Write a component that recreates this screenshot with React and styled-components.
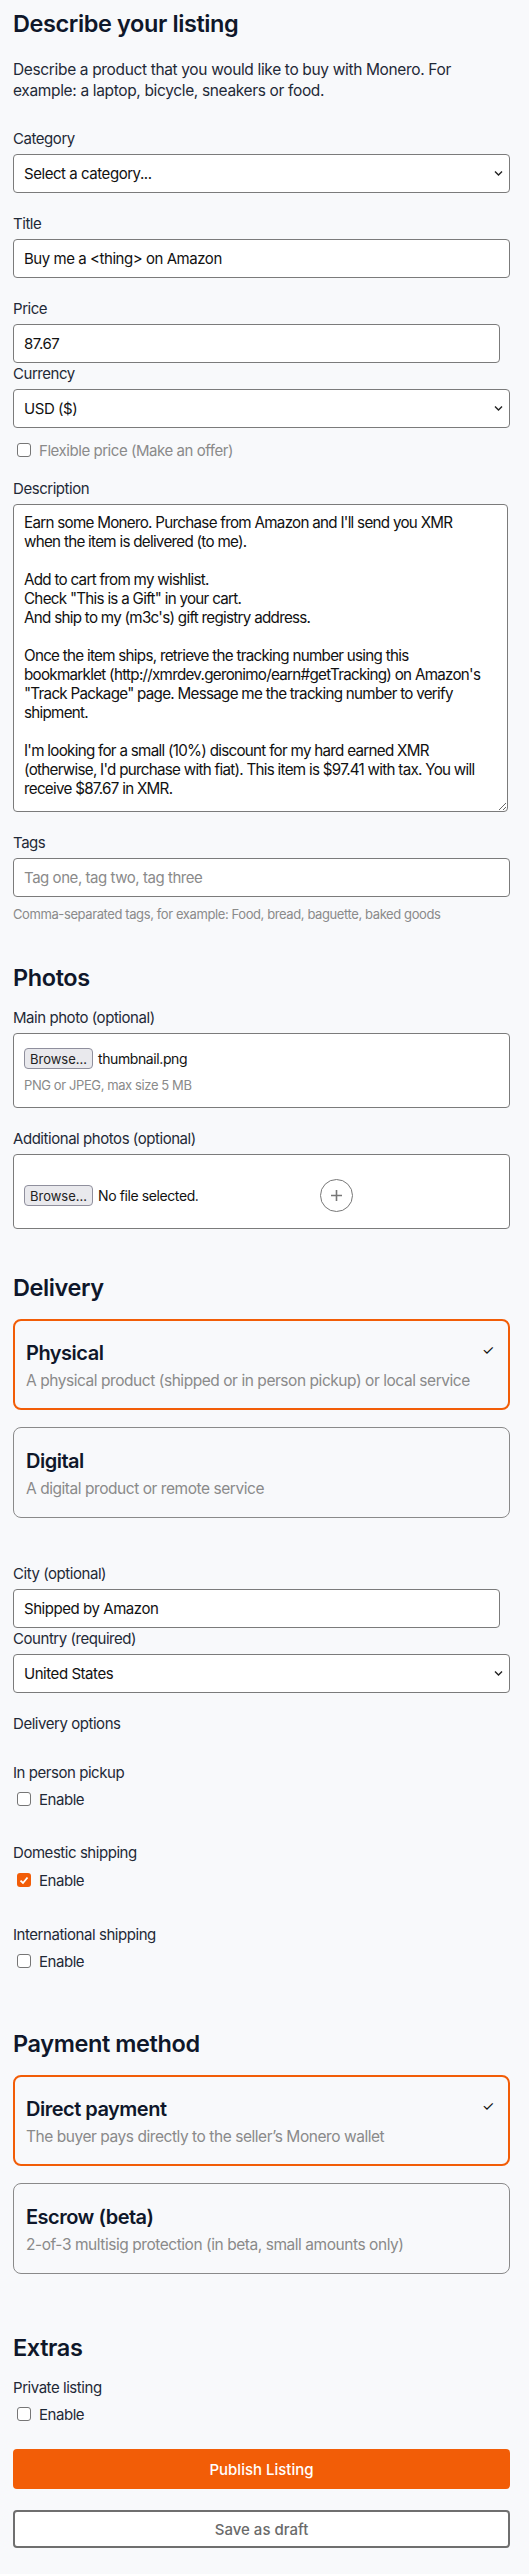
import React from 'react'
import styled, { createGlobalStyle } from 'styled-components'

const GlobalStyle = createGlobalStyle`
  body {
    margin: 0;
    background: #f8f9fb;
    font-family: Inter, "Noto Sans", sans-serif;
    color: #111827;
    letter-spacing: -0.45px;
  }
  * { box-sizing: border-box; }
`;

const Page = styled.main`
  padding: 9px 19px 24px 13px;
  display: flex;
  flex-direction: column;
`;

const Heading = styled.h2`
  font-size: 23.5px;
  line-height: 29px;
  font-weight: 600;
  color: #0f172a;
  margin: ${p => p.$top || 0}px 0 ${p => p.$bottom || 17}px;
  letter-spacing: -0.4px;
`;

const Intro = styled.p`
  font-size: 15.5px;
  line-height: 21px;
  letter-spacing: -0.35px;
  margin: 0 0 29px;
  color: #1f2937;
`;

const Field = styled.div`
  display: flex;
  flex-direction: column;
  margin-bottom: ${p => (p.$mb !== undefined ? p.$mb : 22)}px;
`;

const Label = styled.label`
  font-size: 15px;
  line-height: 18px;
  color: #1f2937;
  margin-bottom: ${p => (p.$mb !== undefined ? p.$mb : 6)}px;
`;

const Input = styled.input`
  height: 39px;
  width: ${p => (p.$narrow ? '487px' : '100%')};
  border: 1px solid #7b7b7b;
  border-radius: 4px;
  background: #fff;
  padding: 0 10px;
  font: inherit;
  font-size: 15px;
  letter-spacing: -0.45px;
  color: #111;
  &::placeholder { color: #8a8a8a; }
`;

const SelectBox = styled.div`
  position: relative;
  height: 39px;
  border: 1px solid #7b7b7b;
  border-radius: 4px;
  background: #fff;
  display: flex;
  align-items: center;
  padding: 0 10px;
  font-size: 15px;
  color: #111;
`;

const Chevron = styled.svg`
  position: absolute;
  right: 6px;
  top: 15px;
`;

const TextArea = styled.textarea`
  height: 308px;
  width: 495px;
  border: 1px solid #7b7b7b;
  border-radius: 4px;
  background: #fff;
  padding: 8px 10px;
  font: inherit;
  font-size: 15.2px;
  letter-spacing: -0.72px;
  line-height: 19px;
  color: #111;
  resize: vertical;
  overflow: hidden;
`;

const Hint = styled.div`
  font-size: 13px;
  line-height: 16px;
  letter-spacing: -0.4px;
  color: #8a8a8a;
  margin-top: ${p => p.$top || 0}px;
`;

const CheckRow = styled.label`
  display: flex;
  align-items: center;
  gap: 8px;
  height: 20px;
  padding-left: 4px;
  font-size: 15px;
  color: ${p => (p.$muted ? '#8a8a8a' : '#1f2937')};
  margin: ${p => p.$top || 0}px 0 ${p => p.$bottom || 0}px;
`;

const Box = styled.span`
  width: 14px;
  height: 14px;
  border-radius: 3px;
  border: ${p => (p.$on ? 'none' : '1px solid #767676')};
  background: ${p => (p.$on ? '#f25d07' : '#fff')};
  display: flex;
  align-items: center;
  justify-content: center;
  flex-shrink: 0;
`;

const FilePanel = styled.div`
  border: 1px solid #7b7b7b;
  border-radius: 4px;
  background: #fff;
  height: 75px;
  padding: ${p => p.$pad};
  display: flex;
  flex-direction: column;
`;

const FileRow = styled.div`
  display: flex;
  align-items: center;
  gap: 5px;
  font-size: 14px;
  letter-spacing: -0.4px;
  color: #111;
`;

const BrowseButton = styled.span`
  height: 21px;
  width: 69px;
  border: 1px solid #8f8f9d;
  border-radius: 4px;
  background: #e9e9ed;
  font-size: 13px;
  letter-spacing: 0;
  display: flex;
  align-items: center;
  justify-content: center;
  color: #222;
`;

const AddCircle = styled.span`
  width: 33px;
  height: 33px;
  border-radius: 50%;
  border: 1px solid #777;
  margin-left: 117px;
  display: flex;
  align-items: center;
  justify-content: center;
`;

const OptionCard = styled.div`
  position: relative;
  height: 91px;
  border: ${p => (p.$selected ? '2px solid #f25d07' : '1px solid #8a8a8a')};
  border-radius: 8px;
  padding: ${p => (p.$selected ? '20px 11px 0' : '21px 12px 0')};
  margin-bottom: ${p => p.$mb || 0}px;
  display: flex;
  flex-direction: column;
  gap: 6px;
`;

const CardTitle = styled.div`
  font-size: 20px;
  line-height: 24px;
  font-weight: 600;
  letter-spacing: -0.5px;
  color: #0f172a;
`;

const CardText = styled.div`
  font-size: 15.5px;
  line-height: 20px;
  color: #8a8a8a;
  white-space: nowrap;
`;

const Tick = styled.span`
  position: absolute;
  right: 14px;
  top: 20px;
  font-size: 14px;
  color: #111;
`;

const PrimaryButton = styled.button`
  height: 40px;
  border: none;
  border-radius: 4px;
  background: #f25d07;
  color: #fff;
  font: inherit;
  font-size: 15px;
  font-weight: 500;
  margin: 25px 0 21px;
`;

const GhostButton = styled.button`
  height: 38px;
  border: 2px solid #6f6f6f;
  border-radius: 4px;
  background: #fff;
  color: #6a6a6a;
  font: inherit;
  font-size: 15px;
  font-weight: 500;
`;

const description = `Earn some Monero. Purchase from Amazon and I'll send you XMR
when the item is delivered (to me).

Add to cart from my wishlist.
Check "This is a Gift" in your cart.
And ship to my (m3c's) gift registry address.

Once the item ships, retrieve the tracking number using this
bookmarklet (http://xmrdev.geronimo/earn#getTracking) on Amazon's
"Track Package" page. Message me the tracking number to verify
shipment.

I'm looking for a small (10%) discount for my hard earned XMR
(otherwise, I'd purchase with fiat). This item is $97.41 with tax. You will
receive $87.67 in XMR.`

const Select = ({ value }) => (
  <SelectBox>
    {value}
    <Chevron width="9" height="7" viewBox="0 0 9 7">
      <path d="M1 1.5 L4.5 5 L8 1.5" fill="none" stroke="#222" strokeWidth="1.4" />
    </Chevron>
  </SelectBox>
)

const Check = ({ on, children, ...rest }) => (
  <CheckRow {...rest}>
    <Box $on={on}>
      {on && (
        <svg width="10" height="9" viewBox="0 0 10 9">
          <path d="M1.5 4.6 L4 7 L8.5 1.5" fill="none" stroke="#fff" strokeWidth="1.8" />
        </svg>
      )}
    </Box>
    {children}
  </CheckRow>
)

const App = () => {
  return (
    <Page>
      <GlobalStyle />
      <Heading $bottom={21}>Describe your listing</Heading>
      <Intro>
        Describe a product that you would like to buy with Monero. For example: a laptop, bicycle, sneakers or food.
      </Intro>

      <Field>
        <Label>Category</Label>
        <Select value="Select a category..." />
      </Field>
      <Field>
        <Label>Title</Label>
        <Input defaultValue="Buy me a <thing> on Amazon" />
      </Field>
      <Field $mb={2}>
        <Label>Price</Label>
        <Input $narrow defaultValue="87.67" />
      </Field>
      <Field $mb={0}>
        <Label>Currency</Label>
        <Select value="USD ($)" />
      </Field>
      <Check $muted $top={12} $bottom={20}>Flexible price (Make an offer)</Check>
      <Field>
        <Label>Description</Label>
        <TextArea spellCheck={false} wrap="off" defaultValue={description} />
      </Field>
      <Field $mb={0}>
        <Label>Tags</Label>
        <Input placeholder="Tag one, tag two, tag three" />
        <Hint $top={9}>Comma-separated tags, for example: Food, bread, baguette, baked goods</Hint>
      </Field>

      <Heading $top={41}>Photos</Heading>
      <Field>
        <Label>Main photo (optional)</Label>
        <FilePanel $pad="14px 10px 0">
          <FileRow>
            <BrowseButton>Browse…</BrowseButton>
            thumbnail.png
          </FileRow>
          <Hint $top={8}>PNG or JPEG, max size 5 MB</Hint>
        </FilePanel>
      </Field>
      <Field $mb={0}>
        <Label>Additional photos (optional)</Label>
        <FilePanel $pad="24px 10px 0">
          <FileRow>
            <BrowseButton>Browse…</BrowseButton>
            No file selected.
            <AddCircle>
              <svg width="13" height="13" viewBox="0 0 13 13">
                <path d="M6.5 1 V12 M1 6.5 H12" stroke="#777" strokeWidth="1.6" />
              </svg>
            </AddCircle>
          </FileRow>
        </FilePanel>
      </Field>

      <Heading $top={44}>Delivery</Heading>
      <OptionCard $selected $mb={17}>
        <CardTitle>Physical</CardTitle>
        <CardText>A physical product (shipped or in person pickup) or local service</CardText>
        <Tick>✓</Tick>
      </OptionCard>
      <OptionCard $mb={47}>
        <CardTitle>Digital</CardTitle>
        <CardText>A digital product or remote service</CardText>
      </OptionCard>

      <Field $mb={2}>
        <Label>City (optional)</Label>
        <Input $narrow defaultValue="Shipped by Amazon" />
      </Field>
      <Field>
        <Label>Country (required)</Label>
        <Select value="United States" />
      </Field>
      <Label $mb={31}>Delivery options</Label>
      <Label $mb={7}>In person pickup</Label>
      <Check $bottom={35}>Enable</Check>
      <Label $mb={8}>Domestic shipping</Label>
      <Check on $bottom={36}>Enable</Check>
      <Label $mb={7}>International shipping</Label>
      <Check>Enable</Check>

      <Heading $top={58}>Payment method</Heading>
      <OptionCard $selected $mb={17}>
        <CardTitle>Direct payment</CardTitle>
        <CardText>The buyer pays directly to the seller’s Monero wallet</CardText>
        <Tick>✓</Tick>
      </OptionCard>
      <OptionCard>
        <CardTitle>Escrow (beta)</CardTitle>
        <CardText>2-of-3 multisig protection (in beta, small amounts only)</CardText>
      </OptionCard>

      <Heading $top={59}>Extras</Heading>
      <Label $mb={7}>Private listing</Label>
      <Check>Enable</Check>

      <PrimaryButton>Publish Listing</PrimaryButton>
      <GhostButton>Save as draft</GhostButton>
    </Page>
  )
}

export default App
